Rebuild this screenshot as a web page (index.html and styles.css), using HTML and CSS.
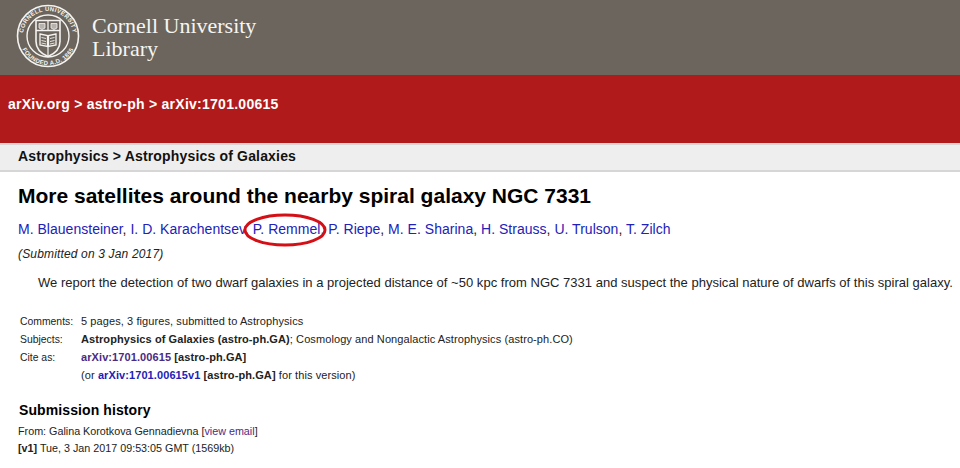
FILE: index.html
```html
<!DOCTYPE html>
<html lang="en">
<head>
<meta charset="utf-8">
<title>More satellites around the nearby spiral galaxy NGC 7331</title>
<link rel="stylesheet" href="styles.css">
</head>
<body>
<header class="brand">
  <svg class="seal" width="64" height="64" viewBox="0 0 64 64" fill="none" stroke="#f4f3f0">
    <circle cx="32" cy="32" r="30.500" stroke-width="1.600"/>
    <circle cx="32" cy="32" r="21" stroke-width="1.400"/>
    <path d="M20 16.500h24v21q0 10-12 15q-12-5-12-15z" stroke-width="1.600"/>
    <path d="M32 16.500v10M20 26.500h24" stroke-width="1.300"/>
    <path d="M23 19.500h6v4.500l-3 1.500l-3-1.500zM35 19.500h6v4.500l-3 1.500l-3-1.500z" fill="#f4f3f0" fill-opacity=".55" stroke-width=".8"/>
    <path d="M24 30l7.500 1.500v11l-7.500-1.500zM40 30l-7.500 1.500v11l7.500-1.500z" stroke-width="1.300"/>
    <path d="M25.500 33.500l4.500 1M25.500 36.500l4.500 1M25.500 39l4.500 1M38.500 33.500l-4.500 1M38.500 36.500l-4.500 1M38.500 39l-4.500 1" stroke-width=".9"/>
    <path d="M32 43v9" stroke-width="1.200"/>
    <defs>
      <path id="seal-top" d="M7 32a25 25 0 0 1 50 0"/>
      <path id="seal-bottom" d="M3 32a29 29 0 0 0 58 0"/>
    </defs>
    <text class="seal-text"><textPath href="#seal-top" startOffset="50%">CORNELL UNIVERSITY</textPath></text>
    <text class="seal-text"><textPath href="#seal-bottom" startOffset="50%">FOUNDED A.D. 1865</textPath></text>
  </svg>
  <div class="wordmark">Cornell University<br>Library</div>
</header>
<nav class="crumbs">arXiv.org &gt; astro-ph &gt; arXiv:1701.00615</nav>
<div class="subject-bar">Astrophysics &gt; Astrophysics of Galaxies</div>
<main class="content">
  <h1 class="title">More satellites around the nearby spiral galaxy NGC 7331</h1>
  <div class="authors">
    <a href="#">M. Blauensteiner</a>, <a href="#">I. D. Karachentsev</a>, <span class="circled"><a href="#">P. Remmel</a><svg class="ring" width="84" height="34" viewBox="0 0 84 34" fill="none"><ellipse cx="42" cy="17" rx="40" ry="15" stroke="#d40f16" stroke-width="3"/></svg></span>, <a href="#">P. Riepe</a>, <a href="#">M. E. Sharina</a>, <a href="#">H. Strauss</a>, <a href="#">U. Trulson</a>, <a href="#">T. Zilch</a>
  </div>
  <div class="dateline">(Submitted on 3 Jan 2017)</div>
  <p class="abstract">We report the detection of two dwarf galaxies in a projected distance of ~50 kpc from NGC 7331 and suspect the physical nature of dwarfs of this spiral galaxy.</p>
  <dl class="meta">
    <dt>Comments:</dt><dd>5 pages, 3 figures, submitted to Astrophysics</dd>
    <dt>Subjects:</dt><dd><b>Astrophysics of Galaxies (astro-ph.GA)</b>; Cosmology and Nongalactic Astrophysics (astro-ph.CO)</dd>
    <dt>Cite as:</dt><dd><a class="visited" href="#"><b>arXiv:1701.00615</b></a> <b>[astro-ph.GA]</b></dd>
    <dt></dt><dd>(or <a href="#"><b>arXiv:1701.00615v1</b></a> <b>[astro-ph.GA]</b> for this version)</dd>
  </dl>
  <h2 class="history-title">Submission history</h2>
  <div class="history">
    <div>From: Galina Korotkova Gennadievna [<a class="visited" href="#">view email</a>]</div>
    <div><b>[v1]</b> Tue, 3 Jan 2017 09:53:05 GMT (1569kb)</div>
  </div>
</main>
</body>
</html>
```
FILE: styles.css
```css
html, body { margin: 0; padding: 0; }
body {
  width: 960px;
  height: 468px;
  overflow: hidden;
  background: #fff;
  color: #000;
  font-family: "Liberation Sans", Arial, sans-serif;
}
a { color: #2222b8; text-decoration: none; }
a.visited { color: #4b2a85; }

.brand {
  height: 75px;
  background: #6b655d;
  display: flex;
  align-items: flex-start;
  box-sizing: border-box;
  padding: 4px 0 0 16px;
  gap: 12px;
}
.seal { flex: none; }
.seal-text {
  font: bold 6px "Liberation Sans", sans-serif;
  letter-spacing: .3px;
  fill: #f4f3f0;
  stroke: none;
  text-anchor: middle;
}
.wordmark {
  font: 22px/23px "Liberation Serif", serif;
  color: #f6f5f2;
  padding-top: 10px;
}

.crumbs {
  height: 68px;
  box-sizing: border-box;
  background: #b01a1a;
  color: #fff;
  font-size: 14px;
  font-weight: bold;
  letter-spacing: .26px;
  line-height: 16px;
  padding: 21px 0 0 8px;
}

.subject-bar {
  height: 29px;
  box-sizing: border-box;
  background: #eeeeee;
  border-top: 2px solid #d6d6d6;
  border-bottom: 2px solid #d6d6d6;
  padding-left: 18px;
  font-size: 14px;
  font-weight: bold;
  letter-spacing: .17px;
  line-height: 23px;
  color: #111;
}

.content { padding: 12px 0 0 18px; }
.title {
  margin: 0;
  font-size: 21px;
  line-height: 24px;
  font-weight: bold;
}
.authors {
  margin-top: 13px;
  font-size: 14px;
  letter-spacing: .02px;
  line-height: 16px;
  white-space: nowrap;
  color: #222;
}
.circled { position: relative; }
.ring {
  position: absolute;
  left: -10px;
  top: -8px;
}
.dateline {
  margin-top: 10px;
  font-size: 12px;
  letter-spacing: .16px;
  line-height: 14px;
  font-style: italic;
  color: #222;
}
.abstract {
  margin: 14px 0 0 20px;
  font-size: 13px;
  letter-spacing: .02px;
  line-height: 16px;
  white-space: nowrap;
  color: #222;
}
.meta {
  margin: 21px 0 0 2px;
  display: grid;
  grid-template-columns: 61px 1fr;
  grid-auto-rows: 18px;
  align-items: baseline;
  font-size: 11px;
  letter-spacing: .09px;
  line-height: 18px;
  color: #222;
}
.meta dt { margin: 0; font-size: 10.400px; letter-spacing: 0; }
.meta dd { margin: 0; }
.meta dd b { color: #222; }
.meta a b { color: inherit; }
.history-title {
  margin: 18px 0 0 1px;
  font-size: 14px;
  letter-spacing: .1px;
  line-height: 16px;
  font-weight: bold;
}
.history {
  margin-top: 5px;
  font-size: 10.750px;
  line-height: 17px;
  color: #222;
}
```
